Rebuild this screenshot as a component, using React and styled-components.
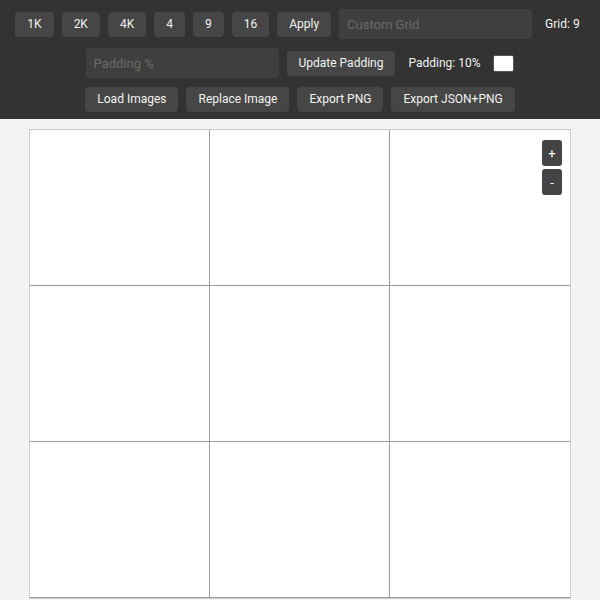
import styled, { createGlobalStyle } from "styled-components";
import { useState } from "react";

const GlobalStyle = createGlobalStyle`
  html, body {
    margin: 0;
    padding: 0;
    background: #f4f4f4;
    font-family: Roboto, "Liberation Sans", sans-serif;
  }
`;

const presets = ["1K", "2K", "4K", "4", "9", "16"];

export default function App() {
  const [grid] = useState(9);
  const [padding] = useState(10);
  const cells = Array.from({ length: grid });

  return (
    <>
      <GlobalStyle />
      <StyledHeader>
        <StyledRow>
          {presets.map((p) => (
            <StyledButton key={p}>{p}</StyledButton>
          ))}
          <StyledButton>Apply</StyledButton>
          <StyledInput placeholder="Custom Grid" />
          <StyledLabel>Grid: {grid}</StyledLabel>
        </StyledRow>
        <StyledRow>
          <StyledInput placeholder="Padding %" />
          <StyledButton>Update Padding</StyledButton>
          <StyledLabel>Padding: {padding}%</StyledLabel>
          <StyledSwatch />
        </StyledRow>
        <StyledRow>
          <StyledButton>Load Images</StyledButton>
          <StyledButton>Replace Image</StyledButton>
          <StyledButton>Export PNG</StyledButton>
          <StyledButton>Export JSON+PNG</StyledButton>
        </StyledRow>
      </StyledHeader>
      <StyledMain>
        <StyledCanvas>
          {cells.map((_, i) => (
            <StyledCell key={i} />
          ))}
          <StyledZoom>
            <StyledZoomButton>+</StyledZoomButton>
            <StyledZoomButton>-</StyledZoomButton>
          </StyledZoom>
        </StyledCanvas>
      </StyledMain>
    </>
  );
}

const StyledHeader = styled.header`
  display: flex;
  flex-direction: column;
  align-items: center;
  gap: 9px;
  padding: 9px 10px 7px;
  background: #333333;
  height: 103px;
`;

const StyledRow = styled.div`
  display: flex;
  align-items: center;
  justify-content: center;
  gap: 8px;
`;

const StyledButton = styled.button`
  height: 25px;
  padding: 0 12px;
  border: none;
  border-radius: 4px;
  background: #464646;
  color: #f2f2f2;
  font-family: Roboto, "Liberation Sans", sans-serif;
  font-size: 12px;
  line-height: 25px;
  white-space: nowrap;
`;

const StyledInput = styled.input`
  box-sizing: border-box;
  width: 193px;
  height: 30px;
  padding: 0 8px;
  border: none;
  border-radius: 4px;
  background: #3f3f3f;
  color: #eeeeee;
  font-family: Roboto, "Liberation Sans", sans-serif;
  font-size: 13px;
  &::placeholder {
    color: #6a6a6a;
  }
  &:focus {
    outline: none;
  }
`;

const StyledLabel = styled.span`
  margin: 0 5px;
  color: #f2f2f2;
  font-size: 12px;
  white-space: nowrap;
`;

const StyledSwatch = styled.div`
  width: 19px;
  height: 15px;
  background: #ffffff;
  border: 1px solid #555;
  border-radius: 2px;
`;

const StyledMain = styled.main`
  display: flex;
  justify-content: center;
  padding-top: 10px;
`;

const StyledCanvas = styled.div`
  position: relative;
  display: grid;
  grid-template-columns: repeat(3, 180px);
  grid-auto-rows: 156px;
  border: 1px solid #cccccc;
  background: #ffffff;
`;

const StyledCell = styled.div`
  box-sizing: border-box;
  border-right: 1px solid #9c9c9c;
  border-bottom: 1px solid #9c9c9c;
  &:nth-child(3n) {
    border-right: none;
  }
`;

const StyledZoom = styled.div`
  position: absolute;
  top: 10px;
  right: 8px;
  display: flex;
  flex-direction: column;
  gap: 3px;
`;

const StyledZoomButton = styled.button`
  width: 20px;
  height: 26px;
  padding: 0;
  border: none;
  border-radius: 3px;
  background: #444444;
  color: #ffffff;
  font-family: Roboto, "Liberation Sans", sans-serif;
  font-size: 13px;
`;
